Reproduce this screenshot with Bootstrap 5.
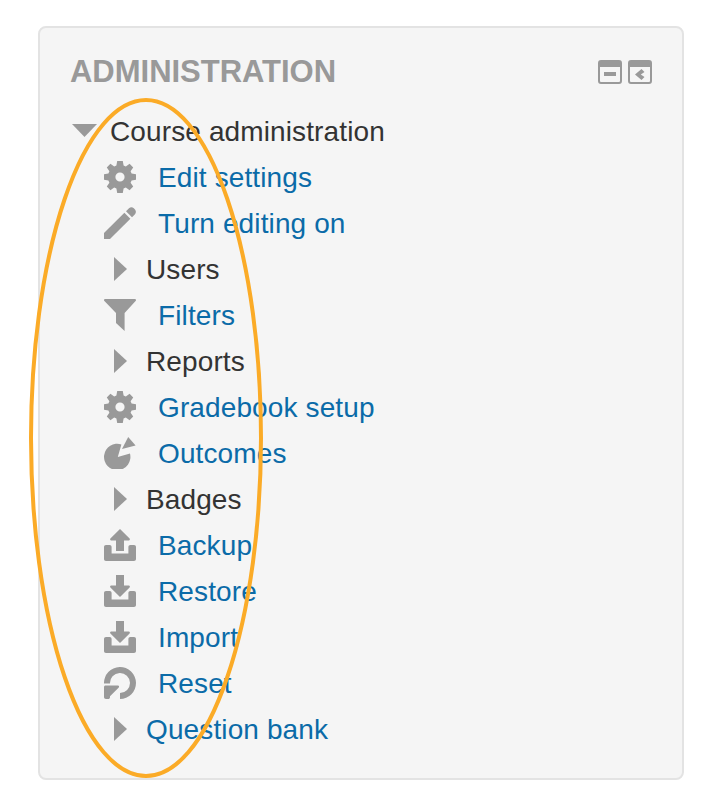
<!DOCTYPE html>
<html lang="en">
<head>
<meta charset="utf-8">
<title>Administration</title>
<link href="https://cdn.jsdelivr.net/npm/bootstrap@5.3.0/dist/css/bootstrap.min.css" rel="stylesheet">
<style>
html,body{height:100%;background:#fff;overflow:hidden}
body{font-family:"Liberation Sans",Arial,sans-serif;color:#333}
.stage{width:720px;height:806px;padding:26px 36px 0 38px}
.adm-block{height:754px;background:#f5f5f5;border:2px solid #e3e3e3;border-radius:8px;padding:0 30px}
.adm-head{height:80px;padding-top:23px}
.adm-title{font-size:31px;line-height:42px;font-weight:700;color:#999;margin:0;letter-spacing:-.02px}
.adm-tools{gap:6px;padding-top:9px}
.adm-tool{width:24px;height:24px;display:block}
.adm-row{height:46px;font-size:28px;line-height:44px;white-space:nowrap;letter-spacing:.12px}
.adm-row a{color:#0b6ba8;text-decoration:none;padding-top:2px}
.adm-row .plain{color:#333;padding-top:2px}
.slot-root{width:40px;flex:none}
.slot-icon{width:32px;height:32px;flex:none;margin-left:34px;margin-right:22px;display:block}
.slot-caret{width:14px;height:24px;flex:none;margin-left:44px;margin-right:18px;display:block}
.adm-ico{fill:#999}
.ring{position:absolute;left:28px;top:97px;width:236px;height:682px;pointer-events:none}
</style>
</head>
<body>
<svg width="0" height="0" class="position-absolute">
<defs>
<symbol id="i-gear" viewBox="0 0 16 16">
<path fill-rule="evenodd" d="M6.6 0h2.800l.4 2.200 1.100.5L12.800 1.400 14.600 3.200 13.300 5.100l.5 1.100L16 6.600v2.800l-2.200.4-.5 1.100 1.300 1.900-1.800 1.800-1.900-1.300-1.100.5-.4 2.200H6.600l-.4-2.200-1.100-.5-1.900 1.300-1.800-1.800 1.300-1.900-.5-1.100L0 9.400V6.600l2.200-.4.500-1.100L1.400 3.200 3.200 1.400 5.100 2.700l1.100-.5zM8 5.700a2.300 2.300 0 1 0 0 4.600 2.300 2.300 0 0 0 0-4.600z"/>
</symbol>
<symbol id="i-pencil" viewBox="0 0 16 16">
<path d="M0 13 10.200 2.900 13.200 5.900 3 16H0z"/>
<path d="M11 2.100 12.500.6c.7-.7 1.700-.7 2.400 0l.6.600c.6.700.6 1.700 0 2.400L14 5.100z"/>
</symbol>
<symbol id="i-funnel" viewBox="0 0 16 16">
<path d="M.6 0h14.800c.5 0 .8.600.4 1L10.300 7v9L6 12V7L.2 1C-.2.600.100 0 .6 0z"/>
</symbol>
<symbol id="i-outcomes" viewBox="0 0 16 16">
<path d="M8.700 3.700 6.900 10 13 8.300A6.600 6.600 0 1 1 8.700 3.700z"/>
<path d="M12.100 0 15.800 4.200 9 6z"/>
</symbol>
<symbol id="i-upload" viewBox="0 0 16 16">
<path d="M0 9c0-.6.400-1 1-1h1.800c.6 0 1 .4 1 1v3.200h8.400V9c0-.6.400-1 1-1H15c.6 0 1 .4 1 1v6c0 .6-.4 1-1 1H1c-.6 0-1-.4-1-1z"/>
<path d="M8 0l4.800 4.800c.3.400.1.900-.4.900H10v5.300H6V5.700H3.600c-.5 0-.7-.5-.4-.9z"/>
</symbol>
<symbol id="i-download" viewBox="0 0 16 16">
<path d="M0 9c0-.6.400-1 1-1h1.800c.6 0 1 .4 1 1v3.200h8.400V9c0-.6.400-1 1-1H15c.6 0 1 .4 1 1v6c0 .6-.4 1-1 1H1c-.6 0-1-.4-1-1z"/>
<path d="M6 0h4v5.300h2.400c.5 0 .7.500.4.900L8 11 3.200 6.200c-.3-.4-.1-.9.400-.9H6z"/>
</symbol>
<symbol id="i-reset" viewBox="0 0 16 16">
<path d="M0 8.300A8 8 0 1 1 8 16v-3a5 5 0 1 0-5-4.700z"/>
<path d="M.8 9.300H7c.5 0 .7.500.4.900L3 14.600v.5c0 .5-.4.900-.9.900H1c-.6 0-1-.4-1-1V10.100c0-.5.300-.8.800-.8z"/>
</symbol>
<symbol id="i-caret" viewBox="0 0 14 24">
<path d="M0 0 13 12 0 24z"/>
</symbol>
</defs>
</svg>
<div class="stage position-relative">
<section class="adm-block">
<div class="adm-head d-flex justify-content-between align-items-start">
<h2 class="adm-title">ADMINISTRATION</h2>
<div class="adm-tools d-flex">
<svg class="adm-tool" viewBox="0 0 24 24"><path class="adm-ico" fill-rule="evenodd" d="M3 0h18a3 3 0 0 1 3 3v18a3 3 0 0 1-3 3H3a3 3 0 0 1-3-3V3a3 3 0 0 1 3-3zM2 7v14a1 1 0 0 0 1 1h18a1 1 0 0 0 1-1V7z"/><rect class="adm-ico" x="6" y="12" width="12" height="4"/></svg>
<svg class="adm-tool" viewBox="0 0 24 24"><path class="adm-ico" fill-rule="evenodd" d="M3 0h18a3 3 0 0 1 3 3v18a3 3 0 0 1-3 3H3a3 3 0 0 1-3-3V3a3 3 0 0 1 3-3zM2 7v14a1 1 0 0 0 1 1h18a1 1 0 0 0 1-1V7z"/><path class="adm-ico" d="M7 14.500 13.500 9 16.500 12 12.800 14.500 16.500 17 13.500 20z"/></svg>
</div>
</div>
<nav aria-label="Administration">
<div class="adm-row d-flex align-items-center"><svg class="slot-root" width="40" height="16" viewBox="0 0 40 16"><path class="adm-ico" d="M2 1H27L14.500 14z"/></svg><span class="plain">Course administration</span></div>
<div class="adm-row d-flex align-items-center"><svg class="slot-icon adm-ico"><use href="#i-gear"/></svg><a href="#">Edit settings</a></div>
<div class="adm-row d-flex align-items-center"><svg class="slot-icon adm-ico"><use href="#i-pencil"/></svg><a href="#">Turn editing on</a></div>
<div class="adm-row d-flex align-items-center"><svg class="slot-caret adm-ico"><use href="#i-caret"/></svg><span class="plain">Users</span></div>
<div class="adm-row d-flex align-items-center"><svg class="slot-icon adm-ico"><use href="#i-funnel"/></svg><a href="#">Filters</a></div>
<div class="adm-row d-flex align-items-center"><svg class="slot-caret adm-ico"><use href="#i-caret"/></svg><span class="plain">Reports</span></div>
<div class="adm-row d-flex align-items-center"><svg class="slot-icon adm-ico"><use href="#i-gear"/></svg><a href="#">Gradebook setup</a></div>
<div class="adm-row d-flex align-items-center"><svg class="slot-icon adm-ico"><use href="#i-outcomes"/></svg><a href="#">Outcomes</a></div>
<div class="adm-row d-flex align-items-center"><svg class="slot-caret adm-ico"><use href="#i-caret"/></svg><span class="plain">Badges</span></div>
<div class="adm-row d-flex align-items-center"><svg class="slot-icon adm-ico"><use href="#i-upload"/></svg><a href="#">Backup</a></div>
<div class="adm-row d-flex align-items-center"><svg class="slot-icon adm-ico"><use href="#i-download"/></svg><a href="#">Restore</a></div>
<div class="adm-row d-flex align-items-center"><svg class="slot-icon adm-ico"><use href="#i-download"/></svg><a href="#">Import</a></div>
<div class="adm-row d-flex align-items-center"><svg class="slot-icon adm-ico"><use href="#i-reset"/></svg><a href="#">Reset</a></div>
<div class="adm-row d-flex align-items-center"><svg class="slot-caret adm-ico"><use href="#i-caret"/></svg><a href="#">Question bank</a></div>
</nav>
</section>
<svg class="ring" viewBox="0 0 236 682"><ellipse cx="118" cy="341" rx="115" ry="338" fill="none" stroke="#fbab27" stroke-width="4"/></svg>
</div>
<script src="https://cdn.jsdelivr.net/npm/bootstrap@5.3.0/dist/js/bootstrap.bundle.min.js"></script>
</body>
</html>
